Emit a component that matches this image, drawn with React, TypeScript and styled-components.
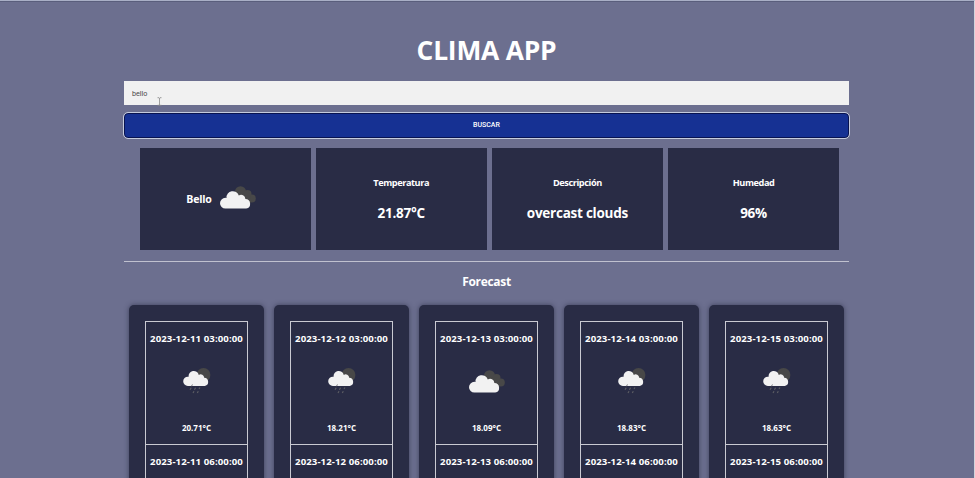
import React from "react";
import styled, { createGlobalStyle } from "styled-components";

const GlobalStyle = createGlobalStyle`
  * { box-sizing: border-box; }
  html, body { margin: 0; padding: 0; overflow: hidden; background: #6c6f8f; }
  h1, h2, h3, h4, p { margin: 0; font-weight: 700; white-space: nowrap; }
`;

const Page = styled.main`
  height: 478px;
  overflow: hidden;
  background: #6c6f8f;
  border-top: 1px solid #a9afc6;
  border-right: 1px solid #d3d4dc;
  box-shadow: inset 0 1px 0 #5a5e7c;
  color: #fff;
  font-family: "Open Sans", "Noto Sans", sans-serif;
`;

const Container = styled.div`
  width: 725px;
  margin-left: 124px;
  padding-top: 30px;
  display: flex;
  flex-direction: column;
`;

const Title = styled.h1`
  height: 38px;
  line-height: 38px;
  font-size: 26.4px;
  text-align: center;
  letter-spacing: -0.2px;
`;

const SearchForm = styled.form`
  margin-top: 12px;
  display: flex;
  flex-direction: column;
  gap: 8px;
`;

const SearchInput = styled.input`
  height: 24px;
  border: 0;
  border-radius: 0;
  outline: 0;
  padding: 0 8px;
  background: #f1f1f1;
  color: #4a4a4a;
  font-family: Roboto, sans-serif;
  font-size: 7.2px;
`;

const SearchButton = styled.button`
  height: 24.5px;
  border: 1px solid #081350;
  border-radius: 4px;
  outline: 1px solid #c5cbdd;
  padding: 0;
  background: #163193;
  color: #fff;
  font-family: Roboto, sans-serif;
  font-size: 7px;
  font-weight: 500;
`;

const CursorMark = styled.svg`
  position: absolute;
  left: 156px;
  top: 97px;
  width: 7px;
  height: 9px;
`;

const Summary = styled.section`
  margin: 10px 10px 0 15.5px;
  display: grid;
  grid-template-columns: repeat(4, 171px);
  column-gap: 5.2px;
`;

const SummaryCard = styled.article<{ $row?: boolean }>`
  height: 102.5px;
  padding-right: ${(p) => (p.$row ? "8px" : "0")};
  padding-bottom: ${(p) => (p.$row ? "0" : "1px")};
  background: #292c45;
  display: flex;
  flex-direction: ${(p) => (p.$row ? "row" : "column")};
  align-items: center;
  justify-content: center;
  gap: ${(p) => (p.$row ? "8px" : "14px")};

  svg {
    margin-bottom: 3px;
  }
`;

const Label = styled.h3`
  font-size: 9.2px;
  line-height: 16px;
  letter-spacing: -0.42px;
`;

const City = styled.h3`
  font-size: 10.6px;
  line-height: 16px;
  letter-spacing: -0.2px;
`;

const Value = styled.p`
  font-size: 13.5px;
  line-height: 16px;
  letter-spacing: -0.25px;
`;

const Divider = styled.hr`
  width: 100%;
  height: 1px;
  margin: 11px 0 0;
  border: 0;
  background: #c0c1cf;
`;

const ForecastTitle = styled.h2`
  margin-top: 11px;
  height: 18px;
  line-height: 18px;
  font-size: 12px;
  text-align: center;
  letter-spacing: -0.3px;
`;

const ForecastGrid = styled.section`
  margin: 14px 5px 0;
  display: grid;
  grid-template-columns: repeat(5, 135px);
  column-gap: 10px;
`;

const DayCard = styled.article`
  height: 220px;
  padding: 16px 16px 0;
  border-radius: 5px;
  background: #292c45;
  box-shadow: 0 0 5px rgba(35, 38, 62, 0.65);
`;

const Slot = styled.div`
  height: 123px;
  width: 103px;
  border: 1px solid #c9cad2;
  border-bottom: 0;
  display: flex;
  flex-direction: column;
  align-items: center;
`;

const SlotTime = styled.h4`
  margin-top: 10px;
  height: 14px;
  line-height: 14px;
  font-size: 9.6px;
  letter-spacing: 0.1px;
`;

const IconBox = styled.div`
  height: 70px;
  display: flex;
  align-items: center;
  justify-content: center;
`;

const Temp = styled.p`
  height: 14px;
  margin-top: 5px;
  line-height: 14px;
  font-size: 8px;
`;

const CloudIcon = () => (
  <svg width="36" height="23" viewBox="0 0 36 23" aria-hidden="true">
    <g fill="#484848">
      <circle cx="20.500" cy="5.700" r="5.500" />
      <circle cx="27.500" cy="8" r="4" />
      <circle cx="31.800" cy="12.500" r="4" />
      <path d="M20 8h10l1 8.500h-9z" />
    </g>
    <path
      d="M5.400 22.600a5.400 5.400 0 0 1 0-10.800q.6 0 1.100.1a6.300 6.300 0 0 1 12.300-2.300a4.200 4.200 0 0 1 6.600 3.300a4.900 4.900 0 0 1 .8 9.700z"
      fill="#f2f2f2"
    />
  </svg>
);

const RainIcon = () => (
  <svg width="28" height="28" viewBox="0 0 28 28" aria-hidden="true">
    <circle cx="20.500" cy="8" r="6.900" fill="#484848" />
    <path
      d="M4.800 18.900a4.600 4.600 0 0 1 0-9.200q.4 0 .8.1a5.200 5.200 0 0 1 10.200-1.900a3.500 3.500 0 0 1 5.400 2.800a4.150 4.150 0 0 1 .7 8.200z"
      fill="#f2f2f2"
    />
    <path
      d="M8.200 20.800l-1.200 2M12.600 20.800l-1.200 2M17 20.500l-1 1.500M11 24.200l-1 1.800M15.300 24.200l-1 1.800"
      stroke="#5c5d63"
      strokeWidth="1.200"
      fill="none"
    />
    <path d="M9.400 17.500l-1 2" stroke="#55565c" strokeWidth=".8" />
  </svg>
);

const days = [
  { date: "2023-12-11", temp: "20.71°C", rain: true },
  { date: "2023-12-12", temp: "18.21°C", rain: true },
  { date: "2023-12-13", temp: "18.09°C", rain: false },
  { date: "2023-12-14", temp: "18.83°C", rain: true },
  { date: "2023-12-15", temp: "18.63°C", rain: true },
];

const summary = [
  { label: "Temperatura", value: "21.87°C" },
  { label: "Descripción", value: "overcast clouds" },
  { label: "Humedad", value: "96%" },
];

export default function App() {
  return (
    <Page>
      <GlobalStyle />
      <Container>
        <Title>CLIMA APP</Title>
        <SearchForm onSubmit={(e) => e.preventDefault()}>
          <SearchInput defaultValue="bello" />
          <SearchButton type="submit">BUSCAR</SearchButton>
        </SearchForm>
        <Summary>
          <SummaryCard $row>
            <City>Bello</City>
            <CloudIcon />
          </SummaryCard>
          {summary.map((s) => (
            <SummaryCard key={s.label}>
              <Label>{s.label}</Label>
              <Value>{s.value}</Value>
            </SummaryCard>
          ))}
        </Summary>
        <Divider />
        <ForecastTitle>Forecast</ForecastTitle>
        <ForecastGrid>
          {days.map((d) => (
            <DayCard key={d.date}>
              <Slot>
                <SlotTime>{d.date} 03:00:00</SlotTime>
                <IconBox>{d.rain ? <RainIcon /> : <CloudIcon />}</IconBox>
                <Temp>{d.temp}</Temp>
              </Slot>
              <Slot>
                <SlotTime>{d.date} 06:00:00</SlotTime>
              </Slot>
            </DayCard>
          ))}
        </ForecastGrid>
      </Container>
      <CursorMark viewBox="0 0 7 9" aria-hidden="true">
        <path d="M1.500 .7h1.500l.5.500.5-.5h1.500M3.500 1v7M1.500 8.300h4" stroke="#8b8b8b" strokeWidth=".8" fill="none" />
      </CursorMark>
    </Page>
  );
}
